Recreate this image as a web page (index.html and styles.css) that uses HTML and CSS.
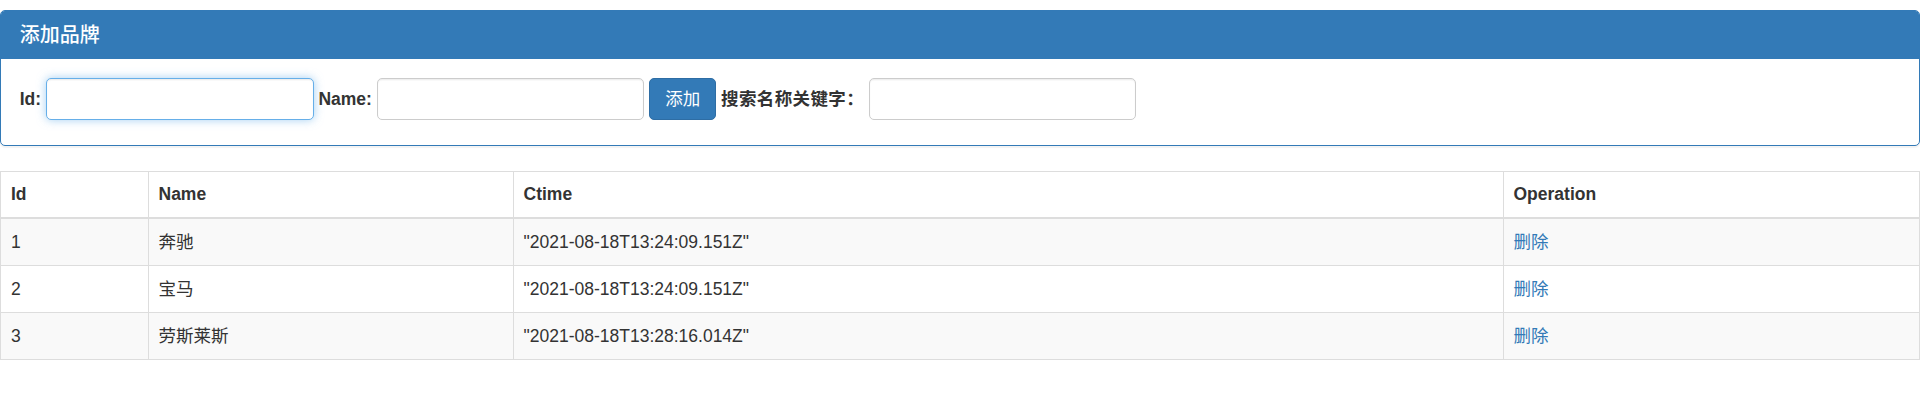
FILE: index.html
```html
<!DOCTYPE html>
<html lang="zh-CN">
<head>
<meta charset="utf-8">
<title>品牌列表</title>
<link rel="stylesheet" href="styles.css">
</head>
<body>
<div class="app">
  <div class="panel">
    <div class="panel-heading">
      <h3 class="panel-title">添加品牌</h3>
    </div>
    <div class="panel-body form-inline">
      <label>Id:</label>
      <input type="text" class="form-control is-focus">
      <label>Name:</label>
      <input type="text" class="form-control">
      <input type="button" value="添加" class="btn">
      <label class="label-cjk">搜索名称关键字：</label>
      <input type="text" class="form-control">
    </div>
  </div>

  <table class="table">
    <thead>
      <tr>
        <th class="col-id">Id</th>
        <th class="col-name">Name</th>
        <th class="col-time">Ctime</th>
        <th>Operation</th>
      </tr>
    </thead>
    <tbody>
      <tr>
        <td>1</td>
        <td>奔驰</td>
        <td>"2021-08-18T13:24:09.151Z"</td>
        <td><a href="#" class="link">删除</a></td>
      </tr>
      <tr>
        <td>2</td>
        <td>宝马</td>
        <td>"2021-08-18T13:24:09.151Z"</td>
        <td><a href="#" class="link">删除</a></td>
      </tr>
      <tr>
        <td>3</td>
        <td>劳斯莱斯</td>
        <td>"2021-08-18T13:28:16.014Z"</td>
        <td><a href="#" class="link">删除</a></td>
      </tr>
    </tbody>
  </table>
</div>
</body>
</html>
```

FILE: styles.css
```css
html {
  zoom: 1.25;
}
* {
  box-sizing: border-box;
}
body {
  margin: 0;
  font-family: "Liberation Sans", Arial, "Noto Sans CJK SC", sans-serif;
  font-size: 14px;
  line-height: 1.42857143;
  color: #333;
  background: #fff;
}
.app {
  padding-top: 8px;
}
.panel {
  margin-bottom: 20px;
  background: #fff;
  border: 1px solid #337ab7;
  border-radius: 4px;
  box-shadow: 0 1px 1px rgba(0, 0, 0, .05);
}
.panel-heading {
  padding: 10px 15px;
  background: #337ab7;
  color: #fff;
  border-bottom: 1px solid #337ab7;
  border-top-left-radius: 3px;
  border-top-right-radius: 3px;
}
.panel-title {
  margin: 0;
  font-size: 16px;
  font-weight: 500;
  line-height: 1.1;
}
.panel-body {
  padding: 15px 15px 20px;
}
.form-inline label {
  display: inline-block;
  margin: 0;
  font-weight: 700;
  vertical-align: middle;
}
.form-inline .label-cjk {
  letter-spacing: 0.3px;
}
.form-control {
  display: inline-block;
  width: 214px;
  height: 34px;
  padding: 6px 12px;
  font-family: inherit;
  font-size: 14px;
  line-height: 1.42857143;
  color: #555;
  background: #fff;
  border: 1px solid #ccc;
  border-radius: 4px;
  box-shadow: inset 0 1px 1px rgba(0, 0, 0, .075);
  vertical-align: middle;
  outline: none;
}
.form-control.is-focus {
  border-color: #66afe9;
  box-shadow: inset 0 1px 1px rgba(0, 0, 0, .075), 0 0 8px rgba(102, 175, 233, .6);
}
.btn {
  display: inline-block;
  padding: 6px 12px;
  font-family: inherit;
  font-size: 14px;
  line-height: 1.42857143;
  color: #fff;
  background: #337ab7;
  border: 1px solid #2e6da4;
  border-radius: 4px;
  vertical-align: middle;
  cursor: pointer;
}
.table {
  width: 100%;
  margin-bottom: 20px;
  border-collapse: collapse;
  border-spacing: 0;
  border: 1px solid #ddd;
}
.table th,
.table td {
  padding: 8px;
  line-height: 1.42857143;
  text-align: left;
  vertical-align: top;
  border: 1px solid #ddd;
}
.table td {
  padding-top: 8.4px;
  padding-bottom: 8.4px;
}
.table thead th {
  vertical-align: bottom;
  border-bottom-width: 2px;
  font-weight: 700;
}
.table tbody tr:nth-of-type(odd) {
  background: #f9f9f9;
}
.col-id {
  width: 118px;
}
.col-name {
  width: 292px;
}
.col-time {
  width: 792px;
}
.link {
  color: #337ab7;
  text-decoration: none;
}
```
